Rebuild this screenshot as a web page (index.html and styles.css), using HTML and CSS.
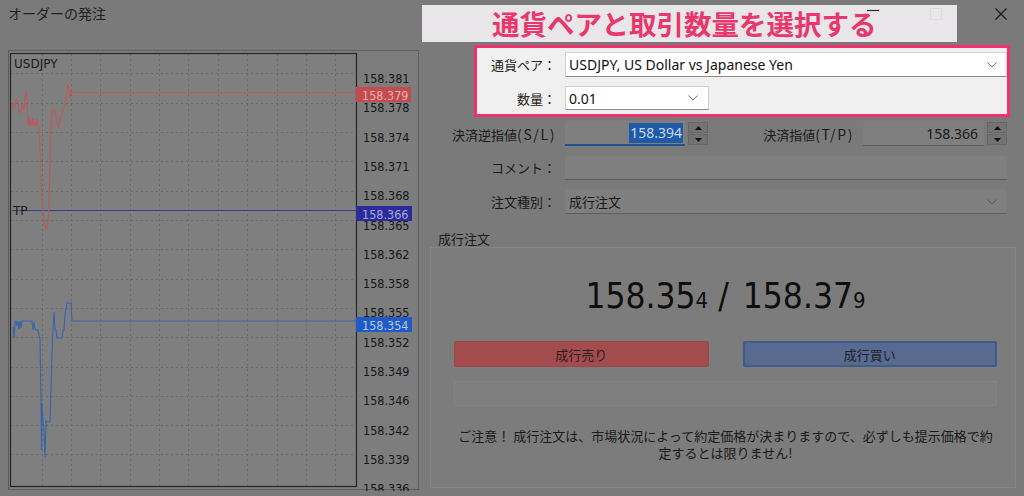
FILE: index.html
```html
<!DOCTYPE html>
<html lang="ja">
<head>
<meta charset="utf-8">
<title>オーダーの発注</title>
<link rel="stylesheet" href="styles.css">
</head>
<body>
<div class="dialog">
  <header class="titlebar">
    <h1 class="title">オーダーの発注</h1>
    <div class="winctl">
      <span class="ctl ctl-min"><svg width="12" height="12" viewBox="0 0 12 12"><path d="M0 2.5H12" stroke="#2a2a2a" stroke-width="1.2"/></svg></span>
      <span class="ctl ctl-max"><svg width="12" height="12" viewBox="0 0 12 12"><rect x="0.5" y="0.5" width="11" height="11" fill="none" stroke="#2a2a2a"/></svg></span>
      <span class="ctl ctl-close"><svg width="12" height="12" viewBox="0 0 12 12"><path d="M0.5 0.5L11.5 11.5M11.5 0.5L0.5 11.5" stroke="#1c1c1c" stroke-width="1.3"/></svg></span>
    </div>
  </header>

  <div class="main">
    <section class="chart-panel">
      <svg class="chart" width="411" height="441" viewBox="8 50 411 441">
        <rect x="8.5" y="50.5" width="410" height="439" fill="#7d7d7d" stroke="#5e5e5e"/>
        <rect x="10.5" y="53.5" width="346" height="433" fill="#7f7f7f" stroke="#262626" stroke-width="1.2"/>
        <path class="grid" d="M42.5 54V486M71.5 54V486M100.5 54V486M130.5 54V486M159.5 54V486M188.5 54V486M218.5 54V486M247.5 54V486M277.5 54V486M306.5 54V486M335.5 54V486M11 73.5H356M11 103.5H356M11 132.5H356M11 161.5H356M11 191.5H356M11 220.5H356M11 249.5H356M11 279.5H356M11 308.5H356M11 337.5H356M11 367.5H356M11 396.5H356M11 425.5H356M11 454.5H356"/>
        <text class="sym" x="14" y="68">USDJPY</text>
        <g class="axis">
          <text x="363" y="83">158.381</text>
          <text x="363" y="112.3">158.378</text>
          <text x="363" y="141.6">158.374</text>
          <text x="363" y="170.9">158.371</text>
          <text x="363" y="200.2">158.368</text>
          <text x="363" y="229.5">158.365</text>
          <text x="363" y="258.8">158.362</text>
          <text x="363" y="288.1">158.358</text>
          <text x="363" y="317.4">158.355</text>
          <text x="363" y="346.7">158.352</text>
          <text x="363" y="376">158.349</text>
          <text x="363" y="405.3">158.346</text>
          <text x="363" y="434.6">158.342</text>
          <text x="363" y="463.9">158.339</text>
          <text x="363" y="493.2">158.336</text>
        </g>
        <path d="M12 210.5H356" stroke="#3c3c8a" stroke-width="1.2"/>
        <text class="sym" x="13" y="215">TP</text>
        <polyline class="ask" points="12,112 13,104 15,106 16,98 18,103 19,112 21,112 22,104 24,110 25,96 26,91 27,100 28,126 29,118 30,126 31,120 32,126 33,118 34,126 35,122 36,126 37,118 38,128 39,128 40,150 41,182 42,200 43,212 44,222 45,226 46,229 47,229 48,222 49,200 50,160 51,125 52,110 55,110 56,116 57,122 58,128 59,124 60,118 61,120 62,112 63,110 64,108 65,104 66,100 67,90 68,84 69,92 70,97 71,90 72,94 73,92.5 356,92.5"/>
        <polyline class="bid" points="13,327 14,338 15,322 16,321 17,326 18,321 19,329 20,321 21,328 22,321 32,321 33,330 34,322 35,329 36,330 38,330 40,340 41,400 41.5,450 42,403 43,420 44,433 45,458 46,420 47,422 50,422 51,390 52,353 53,330 54,312 55,330 56,330 57,338 62,338 63,330 64,330 65,315 67,303 71,303 72,321 356,321"/>
        <rect x="356" y="87" width="55" height="15" fill="#c44b4d"/>
        <text class="tag tag-red" x="362" y="99.5">158.379</text>
        <rect x="356" y="206" width="56" height="15" fill="#2b2b9c"/>
        <text class="tag tag-navy" x="362" y="218.5">158.366</text>
        <rect x="356" y="317" width="56" height="15" fill="#1e5bc4"/>
        <text class="tag tag-blue" x="362" y="329.5">158.354</text>
      </svg>
    </section>

    <section class="form">
      <div class="hl">
        <div class="row">
          <label class="lbl">通貨ペア：</label>
          <div class="combo combo-lite">
            <span class="val">USDJPY, US Dollar vs Japanese Yen</span>
            <svg class="chev" width="10" height="6" viewBox="0 0 10 6"><polyline points="0.5,0.5 5,5 9.5,0.5" fill="none" stroke="#6a6a6a"/></svg>
          </div>
        </div>
        <div class="row row-short">
          <label class="lbl">数量：</label>
          <div class="combo combo-lite combo-qty">
            <span class="val">0.01</span>
            <svg class="chev" width="10" height="6" viewBox="0 0 10 6"><polyline points="0.5,0.5 5,5 9.5,0.5" fill="none" stroke="#6a6a6a"/></svg>
          </div>
        </div>
      </div>

      <div class="row row-first">
        <label class="lbl">決済逆指値<span class="lat">(S/L)</span></label>
        <div class="field field-sl focused"><span class="sel">158.394</span></div>
        <div class="spin">
          <span class="spin-btn"><svg width="7" height="4" viewBox="0 0 7 4"><polygon points="0,4 3.5,0 7,4" fill="#111"/></svg></span>
          <span class="spin-btn"><svg width="7" height="4" viewBox="0 0 7 4"><polygon points="0,0 3.5,4 7,0" fill="#111"/></svg></span>
        </div>
        <label class="lbl lbl-tp">決済指値<span class="lat">(T/P)</span></label>
        <div class="field field-tp"><span>158.366</span></div>
        <div class="spin">
          <span class="spin-btn"><svg width="7" height="4" viewBox="0 0 7 4"><polygon points="0,4 3.5,0 7,4" fill="#111"/></svg></span>
          <span class="spin-btn"><svg width="7" height="4" viewBox="0 0 7 4"><polygon points="0,0 3.5,4 7,0" fill="#111"/></svg></span>
        </div>
      </div>

      <div class="row">
        <label class="lbl">コメント：</label>
        <div class="field field-wide"></div>
      </div>

      <div class="row">
        <label class="lbl">注文種別：</label>
        <div class="combo combo-dim">
          <span class="val">成行注文</span>
          <svg class="chev" width="10" height="6" viewBox="0 0 10 6"><polyline points="0.5,0.5 5,5 9.5,0.5" fill="none" stroke="#555"/></svg>
        </div>
      </div>

      <div class="group-title">成行注文</div>
      <div class="group">
        <div class="quote"><span class="big">158.35</span><span class="small">4</span><span class="sep">/</span><span class="big">158.37</span><span class="small">9</span></div>
        <div class="actions">
          <button class="btn btn-sell" type="button">成行売り</button>
          <button class="btn btn-buy" type="button">成行買い</button>
        </div>
        <div class="status-bar"></div>
        <p class="notice">ご注意！ 成行注文は、市場状況によって約定価格が決まりますので、必ずしも提示価格で約<br>定するとは限りません!</p>
      </div>
    </section>
  </div>

  <div class="banner">通貨ペアと取引数量を選択する</div>
</div>
</body>
</html>
```

FILE: styles.css
```css
* { box-sizing: border-box; }

html, body {
  margin: 0;
  padding: 0;
  width: 1024px;
  height: 496px;
  overflow: hidden;
  background: #7a7a7a;
}

body {
  font-family: "Noto Sans CJK JP", "Noto Sans", sans-serif;
  color: #1d1d1d;
  font-size: 13px;
}

.dialog {
  position: relative;
  width: 1024px;
  height: 496px;
  background: #7a7a7a;
}

/* ---------- title bar ---------- */
.titlebar {
  display: flex;
  align-items: flex-start;
  height: 45px;
}

.title {
  margin: 0;
  padding-left: 8px;
  font-size: 14px;
  font-weight: 400;
  line-height: 27px;
  color: #1f1f1f;
}

.winctl {
  margin-left: auto;
  margin-right: 17px;
  padding-top: 8px;
  display: flex;
}

.ctl { display: block; width: 12px; height: 12px; }
.ctl svg { display: block; }
.ctl-min { margin-right: 51px; position: relative; z-index: 3; }
.ctl-max { margin-right: 53px; }

/* ---------- main ---------- */
.main {
  display: flex;
  align-items: flex-start;
}

.chart-panel {
  margin-left: 8px;
  margin-top: 5px;
  width: 411px;
  height: 441px;
}

.chart { display: block; overflow: hidden; }

.chart .grid {
  stroke: #696969;
  stroke-width: 1;
  stroke-dasharray: 2 3;
  fill: none;
}

.chart text {
  font-family: "DejaVu Sans Condensed", "DejaVu Sans", sans-serif;
  font-stretch: condensed;
  font-size: 12.5px;
}

.chart .sym {
  fill: #1a1a1a;
  font-family: "DejaVu Sans", sans-serif;
  font-stretch: normal;
  font-size: 12px;
}
.chart .axis text { fill: #161616; }

.chart .ask { fill: none; stroke: #b95a5c; stroke-width: 1.1; }
.chart .bid { fill: none; stroke: #3864ac; stroke-width: 1.1; }

.chart .tag-red { fill: #e6b0b0; }
.chart .tag-navy { fill: #a8a8dc; }
.chart .tag-blue { fill: #b4c8ec; }

/* ---------- form ---------- */
.form {
  width: 586px;
  margin-left: 11px;
  display: flex;
  flex-direction: column;
}

.row {
  display: flex;
  align-items: center;
  height: 25px;
  margin-right: 9px;
  margin-top: 9px;
}

.row-first { margin-top: 4px; }

.lbl {
  flex: none;
  width: 126px;
  margin-right: 9px;
  text-align: right;
  white-space: nowrap;
  font-size: 13px;
  color: #1a1a1a;
}

.lbl .lat { font-size: 14px; letter-spacing: 1.6px; }

/* highlighted (not dimmed) area */
.hl {
  position: relative;
  z-index: 2;
  margin-left: 44px;
  margin-right: 6px;
  border: 3px solid #f2306c;
  background: #f0f0f0;
  padding: 4px 0;
}

.hl .row { margin-right: 0; margin-top: 0; }
.hl .row + .row { margin-top: 9px; }
.hl .row-short { height: 24px; }
.hl .lbl { width: 79px; color: #222; }

.combo {
  flex: 1;
  height: 100%;
  display: flex;
  align-items: center;
  padding: 0 9px 0 3px;
}

.combo .val { flex: 1; white-space: nowrap; }
.combo .chev { flex: none; }

.combo-lite {
  background: #fff;
  border: 1px solid #d2d2d2;
  border-bottom-color: #8a8a8a;
  font-family: "Noto Sans", sans-serif;
  font-size: 14px;
  color: #111;
}

.combo-qty { flex: none; width: 144px; padding-right: 10px; }

.combo-dim {
  background: #7f7f7f;
  border: 1px solid #7c7c7c;
  border-bottom-color: #5e5e5e;
  font-size: 13px;
  color: #1a1a1a;
}

.field {
  height: 25px;
  background: #7f7f7f;
  border-bottom: 1px solid #5c5c5c;
  display: flex;
  align-items: center;
  justify-content: flex-end;
  font-family: "Noto Sans", sans-serif;
  font-size: 14px;
  color: #1a1a1a;
}

.field-sl {
  flex: none;
  width: 120px;
  padding-right: 2px;
  border-bottom: 2px solid #23508f;
}

.field-sl .sel {
  background: #1f5aa6;
  color: #c9d8ef;
  line-height: 20px;
  padding: 0 1px;
}

.field-tp {
  flex: 1;
  padding-right: 6px;
}

.field-wide { flex: 1; border-top: 1px solid #7c7c7c; }

.spin {
  flex: none;
  width: 20px;
  height: 23px;
  margin-left: 3px;
  display: flex;
  flex-direction: column;
  gap: 1px;
}

.spin-btn {
  flex: 1;
  display: flex;
  align-items: center;
  justify-content: center;
  background: #737373;
  border: 1px solid #666;
}

.spin-btn svg { display: block; }

.lbl-tp {
  width: 146px;
  margin-right: 9px;
}

/* ---------- market order group ---------- */
.group-title {
  margin-top: 17px;
  padding-left: 8px;
  line-height: 16px;
  font-size: 13px;
  color: #1a1a1a;
}

.group {
  height: 241px;
  border: 1px solid #868686;
  background: #7c7c7c;
  padding: 28px 18px 0 23px;
  display: flex;
  flex-direction: column;
}

.quote {
  height: 40px;
  text-align: center;
  font-family: "DejaVu Sans Condensed", "DejaVu Sans", sans-serif;
  font-stretch: condensed;
  line-height: 40px;
  color: #0e0e0e;
  white-space: nowrap;
}

.quote .big { font-size: 35px; }
.quote .small { font-size: 22px; }
.quote .sep { font-size: 35px; margin: 0 14px 0 10px; }

.actions {
  margin-top: 25px;
  display: grid;
  grid-template-columns: 1fr 1fr;
  gap: 34px;
}

.btn {
  height: 26px;
  margin: 0;
  padding: 0;
  font-family: "Noto Sans CJK JP", sans-serif;
  font-size: 13px;
  color: #2a2222;
  border-radius: 2px;
  cursor: default;
}

.btn-sell {
  background: #a44b4e;
  border: 1px solid #98474a;
}

.btn-buy {
  background: #586a8f;
  border: 2px solid #3c5d8a;
  color: #1e2230;
}

.status-bar {
  margin-top: 14px;
  height: 25px;
  background: #7e7e7e;
  border: 1px solid #838383;
}

.notice {
  margin: 21px 0 0;
  text-align: center;
  font-size: 13px;
  line-height: 17px;
  color: #1a1a1a;
}

/* ---------- annotation banner ---------- */
.banner {
  position: absolute;
  left: 422px;
  top: 5px;
  width: 535px;
  height: 37px;
  z-index: 2;
  background: rgba(250, 248, 250, 0.86);
  padding-left: 70px;
  font-family: "Noto Sans CJK JP", sans-serif;
  font-weight: 700;
  font-size: 27.5px;
  line-height: 37px;
  color: #e9376d;
  white-space: nowrap;
}
```
